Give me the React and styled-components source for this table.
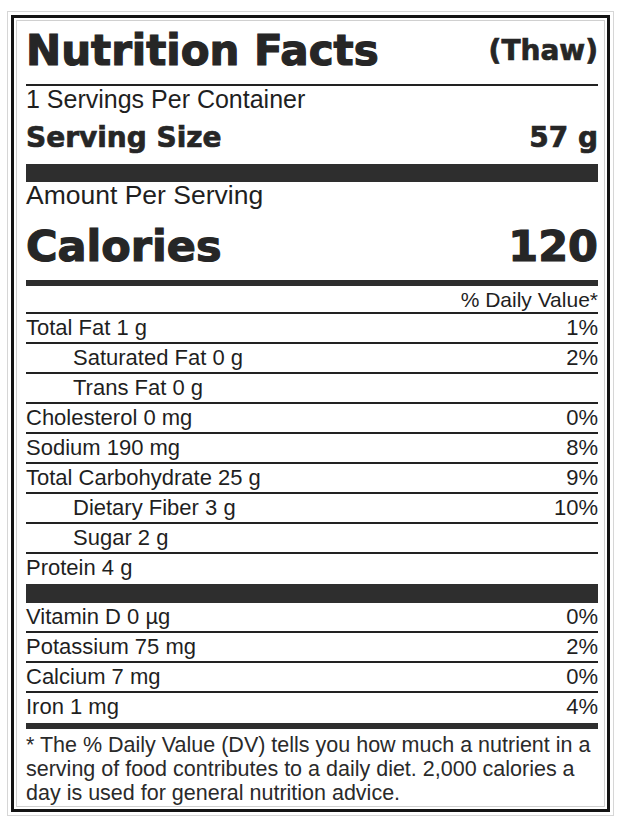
import React from "react";
import styled, { createGlobalStyle } from "styled-components";

const GlobalStyle = createGlobalStyle`
  body {
    margin: 0;
    background: #fff;
    font-family: "Liberation Sans", Arial, sans-serif;
    color: #1f1f1f;
  }
`;

// label data
const nutrients = [
  { label: "Total Fat 1 g", dv: "1%" },
  { label: "Saturated Fat 0 g", dv: "2%", indent: true },
  { label: "Trans Fat 0 g", indent: true },
  { label: "Cholesterol 0 mg", dv: "0%" },
  { label: "Sodium 190 mg", dv: "8%" },
  { label: "Total Carbohydrate 25 g", dv: "9%" },
  { label: "Dietary Fiber 3 g", dv: "10%", indent: true },
  { label: "Sugar 2 g", indent: true },
  { label: "Protein 4 g", last: true },
];

const vitamins = [
  { label: "Vitamin D 0 \u00b5g", dv: "0%" },
  { label: "Potassium 75 mg", dv: "2%" },
  { label: "Calcium 7 mg", dv: "0%" },
  { label: "Iron 1 mg", dv: "4%", last: true },
];

export default function App() {
  return (
    <>
      <GlobalStyle />
      <Frame>
        <Label>
          <Inner>
            <TitleRow>
              <Title>Nutrition Facts</Title>
              <Variant>(Thaw)</Variant>
            </TitleRow>
            <Servings>1 Servings Per Container</Servings>
            <SizeRow>
              <span>Serving Size</span>
              <span>57 g</span>
            </SizeRow>
            <Bar $h={18} />
            <Amount>Amount Per Serving</Amount>
            <CaloriesRow>
              <span>Calories</span>
              <span>120</span>
            </CaloriesRow>
            <Bar $h={6} />
            <DvHead>% Daily Value*</DvHead>
            {nutrients.map((n) => (
              <Row key={n.label} $indent={n.indent} $last={n.last}>
                <span>{n.label}</span>
                <span>{n.dv}</span>
              </Row>
            ))}
            <Bar $h={19} />
            {vitamins.map((n) => (
              <Row key={n.label} $last={n.last}>
                <span>{n.label}</span>
                <span>{n.dv}</span>
              </Row>
            ))}
            <Bar $h={6} />
            <Footnote>
              * The % Daily Value (DV) tells you how much a nutrient in a
              serving of food contributes to a daily diet. 2,000 calories a
              day is used for general nutrition advice.
            </Footnote>
          </Inner>
        </Label>
      </Frame>
    </>
  );
}

const Frame = styled.div`
  margin: 11px 8px 0 7px;
  border: 1px solid #d6d6d6;
  padding: 3px;
`;

const Label = styled.div`
  border: 3px solid #141414;
  padding: 2px;
`;

const Inner = styled.div`
  border: 1px solid #d0d0d0;
  padding: 9px 6px 1px 9px;
`;

// heavy face for the big headings, stroked a little to get the black weight
const heavy = `
  font-family: "DejaVu Sans", "Liberation Sans", sans-serif;
  font-weight: 700;
  color: #262626;
  -webkit-text-stroke: 0.7px #262626;
`;

const TitleRow = styled.div`
  display: flex;
  justify-content: space-between;
  align-items: flex-start;
  padding-bottom: 12px;
  border-bottom: 2px solid #222;
`;

const Title = styled.h1`
  ${heavy}
  -webkit-text-stroke: 1.2px #262626;
  margin: 0;
  font-size: 42px;
  line-height: 42px;
`;

const Variant = styled.span`
  ${heavy}
  margin-top: 7px;
  font-size: 28px;
  line-height: 28px;
`;

const Servings = styled.div`
  font-size: 25px;
  line-height: 26px;
`;

const SizeRow = styled.div`
  ${heavy}
  display: flex;
  justify-content: space-between;
  padding: 10px 0;
  font-size: 28px;
  line-height: 32px;
`;

const Bar = styled.div`
  height: ${(p) => p.$h}px;
  background: #2e2e2e;
`;

const Amount = styled.div`
  font-size: 26.5px;
  line-height: 26px;
`;

const CaloriesRow = styled.div`
  ${heavy}
  -webkit-text-stroke: 1.2px #262626;
  display: flex;
  justify-content: space-between;
  padding: 16px 0 12px;
  font-size: 43px;
  line-height: 44px;
`;

const DvHead = styled.div`
  text-align: right;
  font-size: 21px;
  line-height: 24px;
  padding-top: 2px;
  border-bottom: 2px solid #222;
`;

const Row = styled.div`
  display: flex;
  justify-content: space-between;
  font-size: 22px;
  height: ${(p) => (p.$last ? 30 : 28)}px;
  line-height: 28px;
  padding-left: ${(p) => (p.$indent ? 47 : 0)}px;
  border-bottom: ${(p) => (p.$last ? "none" : "2px solid #222")};
`;

const Footnote = styled.p`
  margin: 0;
  padding-top: 4px;
  font-size: 21.5px;
  line-height: 24px;
  color: #2a2a2a;
`;
